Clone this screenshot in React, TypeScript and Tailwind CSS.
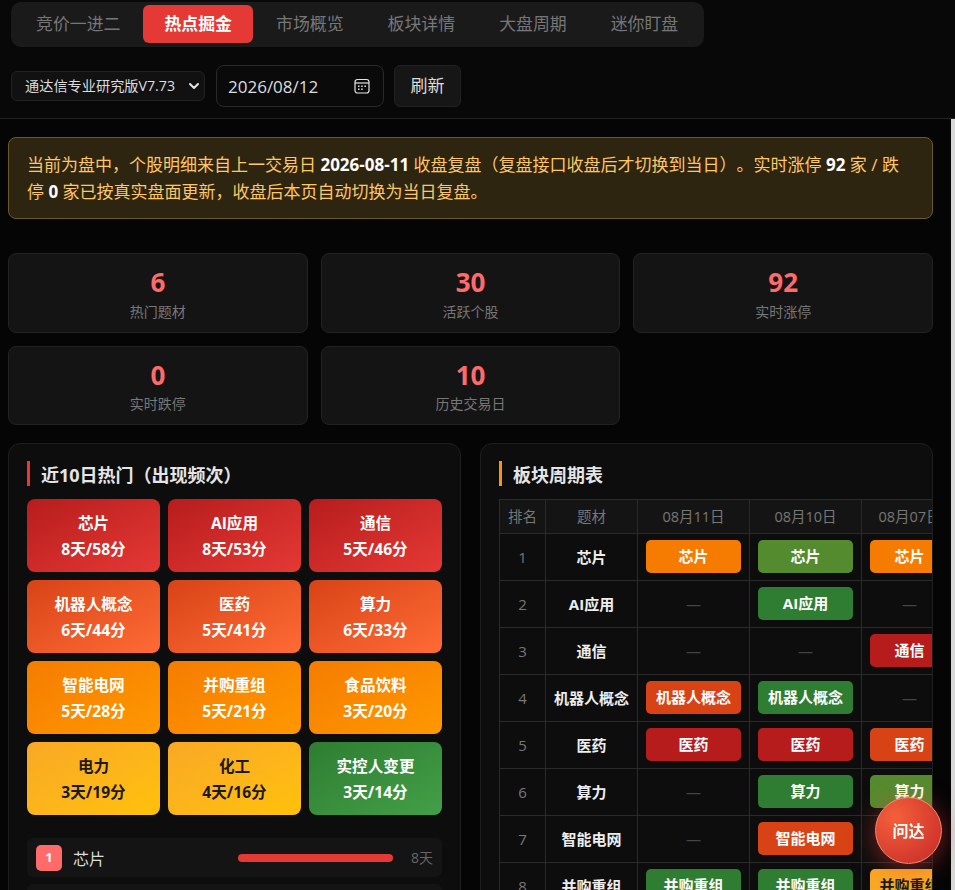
import { ChevronDown } from "lucide-react";

const tabs = ["竞价一进二", "热点掘金", "市场概览", "板块详情", "大盘周期", "迷你盯盘"];

const stats = [
    { value: "6", label: "热门题材" },
    { value: "30", label: "活跃个股" },
    { value: "92", label: "实时涨停" },
    { value: "0", label: "实时跌停" },
    { value: "10", label: "历史交易日" },
];

const red = "bg-gradient-to-br from-[#b71c1c] to-[#e53935] text-white";
const coral = "bg-gradient-to-br from-[#d84315] to-[#ff6b35] text-white";
const orange = "bg-gradient-to-br from-[#f57c00] to-[#ff9800] text-white";
const amber = "bg-gradient-to-br from-[#f9a825] to-[#ffc107] text-[#1a1a1a]";
const green = "bg-gradient-to-br from-[#2e7d32] to-[#43a047] text-white";

const hotItems = [
    { name: "芯片", sub: "8天/58分", tone: red },
    { name: "AI应用", sub: "8天/53分", tone: red },
    { name: "通信", sub: "5天/46分", tone: red },
    { name: "机器人概念", sub: "6天/44分", tone: coral },
    { name: "医药", sub: "5天/41分", tone: coral },
    { name: "算力", sub: "6天/33分", tone: coral },
    { name: "智能电网", sub: "5天/28分", tone: orange },
    { name: "并购重组", sub: "5天/21分", tone: orange },
    { name: "食品饮料", sub: "3天/20分", tone: orange },
    { name: "电力", sub: "3天/19分", tone: amber },
    { name: "化工", sub: "4天/16分", tone: amber },
    { name: "实控人变更", sub: "3天/14分", tone: green },
];

const rankRows = [
    { rank: 1, name: "芯片", days: "8天" },
    { rank: 2, name: "AI应用", days: "8天" },
];

const pillColors: Record<string, string> = {
    o: "bg-[#f57c00] text-white",
    l: "bg-[#558b2f] text-white",
    g: "bg-[#2e7d32] text-white",
    r: "bg-[#b71c1c] text-white",
    c: "bg-[#d84315] text-white",
    a: "bg-[#f9a825] text-[#1a1a1a]",
};

const cycleRows = [
    { name: "芯片", cells: ["o", "l", "o"] },
    { name: "AI应用", cells: ["", "g", ""] },
    { name: "通信", cells: ["", "", "r"] },
    { name: "机器人概念", cells: ["c", "g", ""] },
    { name: "医药", cells: ["r", "r", "c"] },
    { name: "算力", cells: ["", "g", "l"] },
    { name: "智能电网", cells: ["", "c", ""] },
    { name: "并购重组", cells: ["g", "g", "a"] },
];

function CalendarIcon() {
    return (
        <svg width="16" height="16" viewBox="0 0 16 16" fill="none" stroke="#e5e5e5" strokeWidth="1.2">
            <rect x="1" y="1.5" width="14" height="13.5" rx="2.5" />
            <path d="M1 5h14" />
            <g fill="#e5e5e5" stroke="none">
                <rect x="4" y="7.5" width="1.5" height="1.5" />
                <rect x="7.2" y="7.5" width="1.5" height="1.5" />
                <rect x="10.4" y="7.5" width="1.5" height="1.5" />
                <rect x="4" y="10.5" width="1.5" height="1.5" />
                <rect x="7.2" y="10.5" width="1.5" height="1.5" />
            </g>
        </svg>
    );
}

function SectionTitle({ text, bar }: { text: string; bar: string }) {
    return (
        <div className={`border-l-[3px] pl-[11px] pt-[3px] h-[25px] flex items-center text-[18px] font-bold text-[#e5e5e5] ${bar}`}>
            {text}
        </div>
    );
}

export default function App() {
    return (
        <div
            className="h-screen flex flex-col bg-[#050505] overflow-hidden"
            style={{ fontFamily: '"Open Sans", "Noto Sans CJK SC", sans-serif' }}
        >
            <header className="h-[119px] shrink-0 border-b border-[#222] bg-[#080808] pl-[11px] pt-[2px]">
                <nav className="w-[693px] h-[45px] flex gap-[2px] rounded-[10px] bg-[#1a1a1a] px-[4px] pt-[3px]">
                    {tabs.map((tab, i) => (
                        <div
                            key={tab}
                            className={
                                i === 1
                                    ? "h-[38px] px-[21px] flex items-center whitespace-nowrap rounded-[6px] bg-[#e53935] text-white text-[16.9px] font-bold"
                                    : "h-[38px] px-[21px] flex items-center whitespace-nowrap text-[#777] text-[16.9px]"
                            }
                        >
                            {tab}
                        </div>
                    ))}
                </nav>

                <div className="mt-[18px] flex items-center">
                    <div className="w-[194px] h-[30px] flex items-center justify-between rounded-[6px] border border-[#222] bg-[#111] pl-[13px] pr-[2.5px] text-[14.2px] text-[#ddd]">
                        <span>通达信专业研究版V7.73</span>
                        <ChevronDown size={16} strokeWidth={3} color="#e5e5e5" />
                    </div>
                    <div className="ml-[11px] w-[168px] h-[42px] flex items-center justify-between rounded-[8px] border border-[#2a2a2a] bg-[#0a0a0a] pl-[11px] pr-[13px] text-[17px] text-[#ddd]">
                        <span className="pt-[1px]">2026/08/12</span>
                        <CalendarIcon />
                    </div>
                    <div className="ml-[10px] w-[67px] h-[42px] flex items-center justify-center rounded-[6px] border border-[#222] bg-[#161616] text-[17px] text-[#ddd]">
                        刷新
                    </div>
                </div>
            </header>

            <div className="flex-1 min-h-0 flex">
                <main className="flex-1 overflow-hidden pl-[8px] pr-[18px] pt-[18px] bg-[#050505]">
                    <div className="rounded-[8px] border border-[#6b5a25] bg-[#2e2510] pl-[18px] pr-[19px] py-[13px] text-[17px] leading-[27px] text-[#ffc766] [text-spacing-trim:space-all]">
                        当前为盘中，个股明细来自上一交易日 <b className="text-white">2026-08-11</b> 收盘复盘（复盘接口收盘后才切换到当日）。实时涨停 <b className="text-white">92</b> 家 / 跌停 <b className="text-white">0</b> 家已按真实盘面更新，收盘后本页自动切换为当日复盘。
                    </div>

                    <section className="mt-[34px] grid grid-cols-3 gap-[13px]">
                        {stats.map((s) => (
                            <div
                                key={s.label}
                                className="h-[79.5px] flex flex-col items-center rounded-[8px] border border-[#222] bg-[#141414] pt-[11px]"
                            >
                                <div className="text-[26px] leading-[34px] font-bold text-[#ff6b6b]">{s.value}</div>
                                <div className="mt-[2.5px] text-[14px] leading-[20px] text-[#777]">{s.label}</div>
                            </div>
                        ))}
                    </section>

                    <section className="mt-[18px] grid grid-cols-[453px_453px] gap-[19px] items-start">
                        <div className="rounded-[12px] border border-[#1f1f1f] bg-[#0d0d0d] px-[18px] pt-[17px] pb-[16px]">
                            <SectionTitle text="近10日热门（出现频次）" bar="border-[#e53935]" />
                            <div className="mt-[13px] grid grid-cols-3 gap-[8px]">
                                {hotItems.map((item) => (
                                    <div
                                        key={item.name}
                                        className={`h-[73px] flex flex-col items-center justify-center rounded-[8px] text-[15.6px] leading-[26px] font-bold ${item.tone}`}
                                    >
                                        <div>{item.name}</div>
                                        <div>{item.sub}</div>
                                    </div>
                                ))}
                            </div>

                            <div className="mt-[23px] flex flex-col gap-[7px]">
                                {rankRows.map((row) => (
                                    <div key={row.rank} className="h-[39px] flex items-center rounded-[6px] bg-[#141414] px-[9px]">
                                        <span className="w-[26px] h-[26px] flex items-center justify-center rounded-[5px] bg-[#ff6b6b] text-white text-[13px] font-bold">
                                            {row.rank}
                                        </span>
                                        <span className="ml-[11px] w-[165px] pt-[2px] text-[16px] text-[#ddd]">{row.name}</span>
                                        <div className="w-[155px] h-[8px] rounded-full bg-[#e53935]" />
                                        <span className="ml-[18px] text-[14px] text-[#666]">{row.days}</span>
                                    </div>
                                ))}
                            </div>
                        </div>

                        <div className="rounded-[12px] border border-[#1f1f1f] bg-[#0d0d0d] pl-[18px] pt-[17px] pb-[16px] overflow-hidden">
                            <SectionTitle text="板块周期表" bar="border-[#f7931e]" />
                            <div className="mt-[13px] overflow-hidden">
                                <table className="table-fixed border-collapse w-[458px]">
                                    <colgroup>
                                        <col className="w-[46px]" />
                                        <col className="w-[92px]" />
                                        <col className="w-[112px]" />
                                        <col className="w-[112px]" />
                                        <col className="w-[96px]" />
                                    </colgroup>
                                    <thead>
                                        <tr className="h-[34px] bg-[#141414] text-[#777] text-[14.5px]">
                                            {["排名", "题材", "08月11日", "08月10日", "08月07日"].map((h) => (
                                                <th key={h} className="border border-[#2a2a2a] font-normal whitespace-nowrap">
                                                    {h}
                                                </th>
                                            ))}
                                        </tr>
                                    </thead>
                                    <tbody>
                                        {cycleRows.map((row, i) => (
                                            <tr key={row.name} className="h-[47px]">
                                                <td className="border border-[#2a2a2a] text-center text-[15px] text-[#777]">{i + 1}</td>
                                                <td className="border border-[#2a2a2a] text-center text-[15px] font-bold text-[#eee] whitespace-nowrap">
                                                    {row.name}
                                                </td>
                                                {row.cells.map((c, j) => (
                                                    <td key={j} className="border border-[#2a2a2a] px-[8px] pb-[1px] text-center">
                                                        {c ? (
                                                            <div className={`h-[33px] flex items-center justify-center rounded-[5px] text-[15px] font-bold whitespace-nowrap ${pillColors[c]}`}>
                                                                {row.name}
                                                            </div>
                                                        ) : (
                                                            <span className="text-[15px] text-[#444]">—</span>
                                                        )}
                                                    </td>
                                                ))}
                                            </tr>
                                        ))}
                                    </tbody>
                                </table>
                            </div>
                        </div>
                    </section>
                </main>
                <div className="w-[4px] shrink-0 bg-[#d8d8d8]" />
            </div>

            <button className="fixed left-[875px] top-[797px] w-[67px] h-[67px] rounded-full border border-[#f09070] bg-[radial-gradient(circle_at_30%_30%,#f4603a,#c62828)] text-white text-[16px] font-bold shadow-[0_4px_24px_rgba(229,57,53,0.5)]">
                问达
            </button>
        </div>
    );
}
